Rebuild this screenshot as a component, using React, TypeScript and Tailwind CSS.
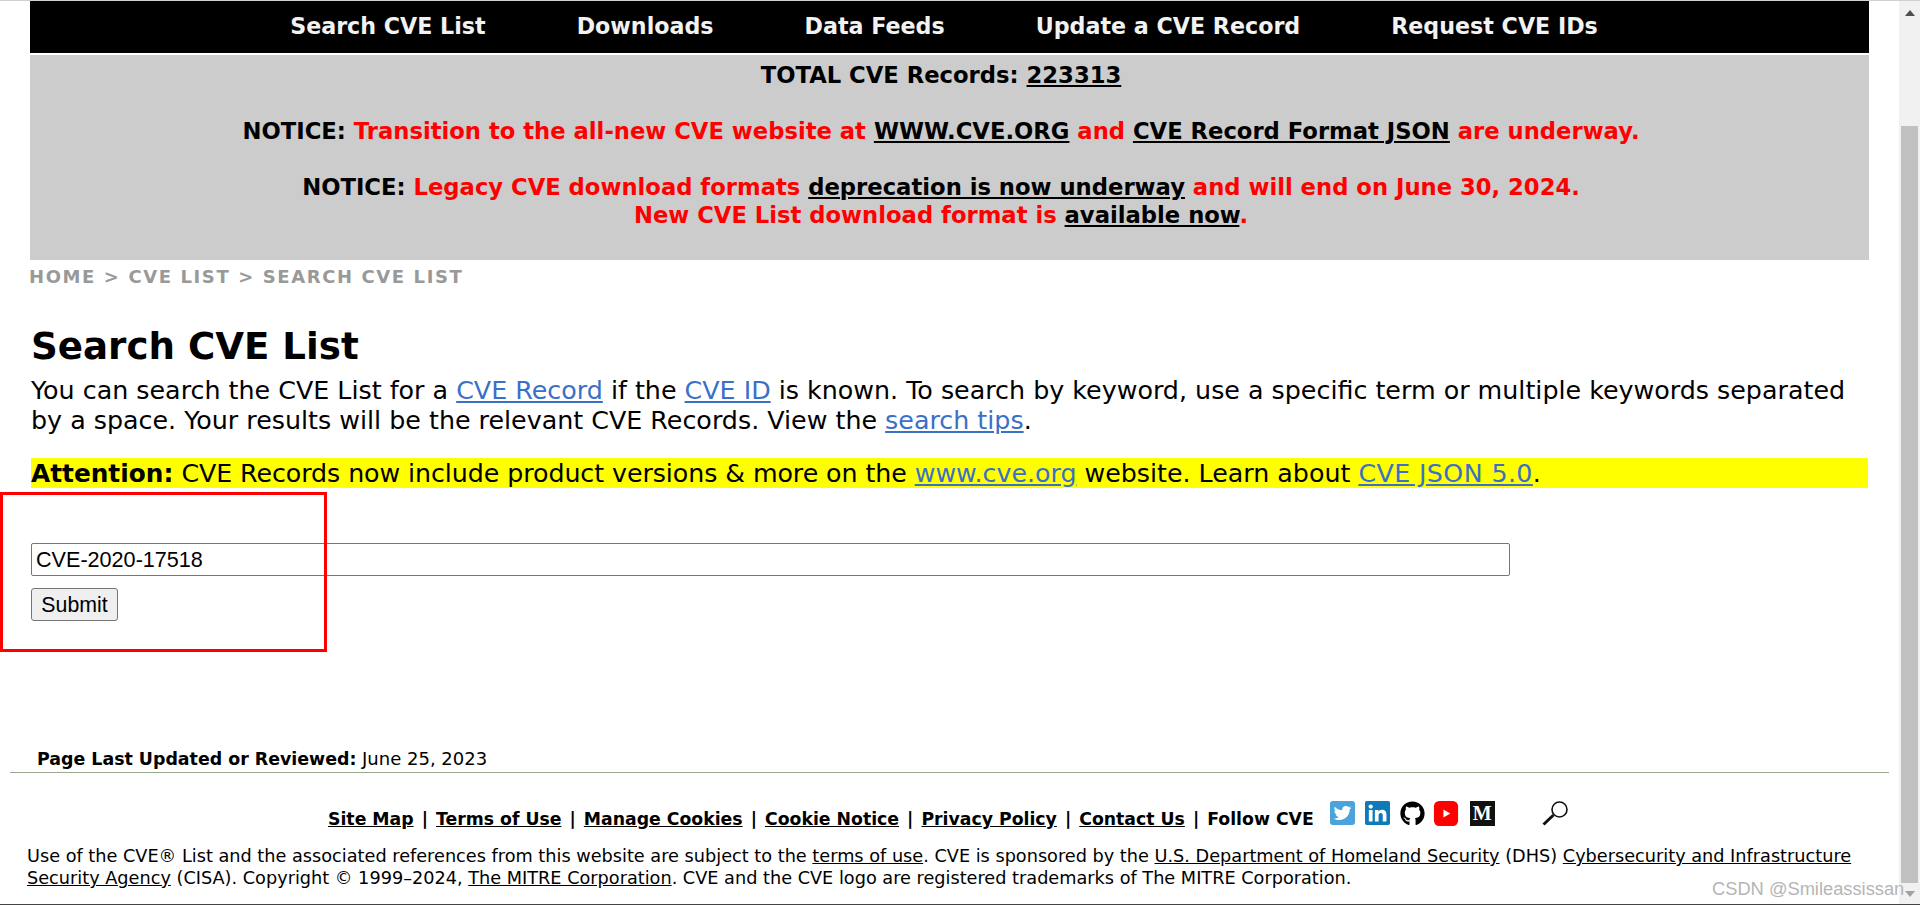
import React from "react";
import { FaTwitterSquare, FaLinkedin, FaGithub } from "react-icons/fa";

const Blk = ({ children }: { children: React.ReactNode }) => (
  <a className="text-black underline decoration-2 underline-offset-2">{children}</a>
);
const Lnk = ({ children }: { children: React.ReactNode }) => (
  <a className="text-[#3a70c8] underline">{children}</a>
);
const U = ({ children }: { children: React.ReactNode }) => <a className="underline">{children}</a>;
const Sep = () => <span className="mx-[2px]"> | </span>;

export default function App() {
  return (
    <div className="relative h-[905px] w-[1920px] overflow-hidden bg-white font-['DejaVu_Sans','Liberation_Sans',sans-serif] text-black">
      <div className="h-px bg-[#d0d0d0]" />
      <div className="flex h-[903px]">
        <div className="flex w-[1899px] flex-col">
          <div className="mx-[30px] flex h-[52px] items-center justify-center gap-[91px] bg-black pr-[11px] text-[22.2px] font-bold text-[#f2f2f2]">
            <span>Search CVE List</span>
            <span>Downloads</span>
            <span>Data Feeds</span>
            <span>Update a CVE Record</span>
            <span>Request CVE IDs</span>
          </div>
          <div className="mx-[30px] mt-[2px] h-[205px] bg-[#cccccc] pr-[17px] pt-[6px] text-center text-[22.7px] font-bold leading-[28px] text-black">
            <div>TOTAL CVE Records: <Blk>223313</Blk></div>
            <div className="mt-[28px]">
              NOTICE: <span className="text-[#ff0000]">Transition to the all-new CVE website at </span><Blk>WWW.CVE.ORG</Blk>
              <span className="text-[#ff0000]"> and </span><Blk>CVE Record Format JSON</Blk>
              <span className="text-[#ff0000]"> are underway.</span>
            </div>
            <div className="mt-[28px]">
              NOTICE: <span className="text-[#ff0000]">Legacy CVE download formats </span><Blk>deprecation is now underway</Blk>
              <span className="text-[#ff0000]"> and will end on June 30, 2024.</span>
            </div>
            <div>
              <span className="text-[#ff0000]">New CVE List download format is </span><Blk>available now</Blk>
              <span className="text-[#ff0000]">.</span>
            </div>
          </div>
          <div className="ml-[29px] mt-[7px] text-[18px] font-bold leading-[20px] tracking-[1.6px] text-[#999999]">
            HOME &gt; CVE LIST &gt; SEARCH CVE LIST
          </div>
          <h1 className="ml-[31px] mt-[36px] text-[37.2px] font-bold leading-[46px]">Search CVE List</h1>
          <p className="mx-[31px] mt-[6px] text-[25.35px] leading-[30px]">
            You can search the CVE List for a <Lnk>CVE Record</Lnk> if the <Lnk>CVE ID</Lnk> is known. To search by keyword, use a specific term or multiple keywords separated by a space. Your results will be the relevant CVE Records. View the <Lnk>search tips</Lnk>.
          </p>
          <p className="mx-[31px] mt-[23px] h-[30px] bg-[#ffff00] text-[25.3px] leading-[32px]">
            <b className="text-[24.8px]">Attention:</b> <span className="tracking-[-0.07px]">CVE Records now include product versions &amp; more on the </span><Lnk>www.cve.org</Lnk> website. Learn about <span className="tracking-[0.4px]"><Lnk>CVE JSON 5.0</Lnk></span>.
          </p>
          <input
            readOnly
            value="CVE-2020-17518"
            className="ml-[31px] mt-[55px] h-[33px] w-[1479px] rounded-[2px] border border-[#767676] px-[4px] font-['Liberation_Sans',sans-serif] text-[21.6px] text-black outline-none"
          />
          <button className="ml-[31px] mt-[12px] h-[33px] w-[87px] rounded-[3px] border border-[#767676] bg-[#efefef] pt-px font-['Liberation_Sans',sans-serif] text-[21.3px] text-black">
            Submit
          </button>
          <div className="ml-[37px] mt-[127px] text-[18px] leading-[22px]">
            <b className="text-[17.4px]">Page Last Updated or Reviewed:</b> June 25, 2023
          </div>
          <div className="mx-[10px] mt-[2px] h-px bg-[#99a88f]" />
          <div className="ml-[328px] mt-[28px] flex h-[36px] items-center text-[17.3px] font-bold leading-[22px]">
            <span className="whitespace-pre">
              <U>Site Map</U><Sep /><U>Terms of Use</U><Sep /><U>Manage Cookies</U><Sep /><U>Cookie Notice</U><Sep /><U>Privacy Policy</U><Sep /><U>Contact Us</U><Sep />Follow CVE
            </span>
            <div className="ml-[16px] mb-[12px] flex items-center">
              <FaTwitterSquare viewBox="0 32 448 448" preserveAspectRatio="none" className="h-[24px] w-[25px] text-[#4aa3dc]" />
              <FaLinkedin viewBox="0 32 448 448" preserveAspectRatio="none" className="ml-[10px] h-[24px] w-[25px] text-[#0f7ab8]" />
              <FaGithub className="ml-[10px] h-[25px] w-[25px] text-black" />
              <svg viewBox="0 0 28 29" className="ml-[7px] h-[25px] w-[28px]">
                <rect width="28" height="29" rx="6" fill="#ff0000" />
                <path d="M11 10 L19 14.5 L11 19 Z" fill="#ffffff" />
              </svg>
              <span className="ml-[10px] flex h-[25px] w-[25px] items-center justify-center bg-[#111111] font-['Liberation_Serif',serif] text-[20px] font-bold leading-none text-white">M</span>
              <svg viewBox="0 0 26 25" className="ml-[47px] h-[25px] w-[26px]" fill="none" stroke="#111111">
                <circle cx="17.5" cy="8.5" r="7.5" strokeWidth="1.6" />
                <path d="M11.5 14 L1.5 23.5" strokeWidth="3" />
              </svg>
            </div>
          </div>
          <p className="mx-[27px] mt-[8px] text-[17.7px] leading-[22px]">
            Use of the CVE® List and the associated references from this website are subject to the <U>terms of use</U>. CVE is sponsored by the <U>U.S. Department of Homeland Security</U> (DHS) <U>Cybersecurity and Infrastructure Security Agency</U> (CISA). Copyright © 1999–2024, <U>The MITRE Corporation</U>. CVE and the CVE logo are registered trademarks of The MITRE Corporation.
          </p>
        </div>
        <div className="flex w-[21px] flex-col items-center bg-[#f1f1f1] pt-[9px]">
          <div className="h-0 w-0 border-x-[5px] border-b-[6px] border-x-transparent border-b-[#505050]" />
          <div className="mt-[110px] h-[757px] w-[17px] shrink-0 bg-[#c1c1c1]" />
          <div className="mt-auto mb-[7px] h-0 w-0 border-x-[5px] border-t-[6px] border-x-transparent border-t-[#a0a0a0]" />
        </div>
      </div>
      <div className="h-px bg-[#444444]" />
      <div className="absolute left-0 top-[492px] h-[160px] w-[327px] border-[3px] border-[#ff0000]" />
      <div className="absolute left-[1712px] top-[879px] font-['Liberation_Sans',sans-serif] text-[18.3px] leading-[20px] text-[#b5b5b5]">
        CSDN @Smileassissan
      </div>
    </div>
  );
}
